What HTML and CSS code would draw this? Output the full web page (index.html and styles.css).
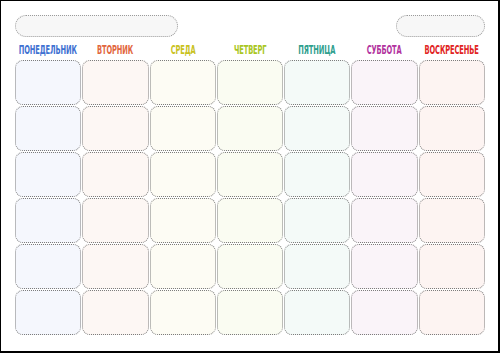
FILE: index.html
```html
<!DOCTYPE html>
<html>
<head>
<meta charset="utf-8">
<link rel="stylesheet" href="styles.css">
</head>
<body>
<div class="frame">
  <div class="header">
    <div class="pill pill-wide"></div>
    <div class="pill pill-short"></div>
  </div>
  <div class="days">
    <div class="day mon"><span class="day-text">ПОНЕДЕЛЬНИК</span></div>
    <div class="day tue"><span class="day-text">ВТОРНИК</span></div>
    <div class="day wed"><span class="day-text">СРЕДА</span></div>
    <div class="day thu"><span class="day-text">ЧЕТВЕРГ</span></div>
    <div class="day fri"><span class="day-text">ПЯТНИЦА</span></div>
    <div class="day sat"><span class="day-text">СУББОТА</span></div>
    <div class="day sun"><span class="day-text">ВОСКРЕСЕНЬЕ</span></div>
  </div>
  <div class="grid">
    <div class="cell c1"></div><div class="cell c2"></div><div class="cell c3"></div><div class="cell c4"></div><div class="cell c5"></div><div class="cell c6"></div><div class="cell c7"></div>
    <div class="cell c1"></div><div class="cell c2"></div><div class="cell c3"></div><div class="cell c4"></div><div class="cell c5"></div><div class="cell c6"></div><div class="cell c7"></div>
    <div class="cell c1"></div><div class="cell c2"></div><div class="cell c3"></div><div class="cell c4"></div><div class="cell c5"></div><div class="cell c6"></div><div class="cell c7"></div>
    <div class="cell c1"></div><div class="cell c2"></div><div class="cell c3"></div><div class="cell c4"></div><div class="cell c5"></div><div class="cell c6"></div><div class="cell c7"></div>
    <div class="cell c1"></div><div class="cell c2"></div><div class="cell c3"></div><div class="cell c4"></div><div class="cell c5"></div><div class="cell c6"></div><div class="cell c7"></div>
    <div class="cell c1"></div><div class="cell c2"></div><div class="cell c3"></div><div class="cell c4"></div><div class="cell c5"></div><div class="cell c6"></div><div class="cell c7"></div>
  </div>
</div>
</body>
</html>
```
FILE: styles.css
```css
html, body {
  margin: 0;
  padding: 0;
  background: #ffffff;
}
.frame {
  box-sizing: border-box;
  width: 500px;
  height: 353px;
  border: 1px solid #000;
  border-bottom-width: 2px;
  border-right-width: 2px;
  background: #fff;
  padding: 14px 13px 0 14px;
  font-family: "DejaVu Sans", sans-serif;
}
.header {
  display: flex;
  justify-content: space-between;
  height: 22px;
}
.pill {
  box-sizing: border-box;
  height: 22px;
  border-radius: 11px;
  border: 1px dotted #9a9a9a;
  background: #f7f7f7;
}
.pill-wide { width: 163px; }
.pill-short { width: 89px; }
.days {
  display: grid;
  grid-template-columns: repeat(7, minmax(0, 1fr));
  column-gap: 1px;
  margin-top: 6px;
  height: 17px;
}
.day {
  display: flex;
  justify-content: center;
  font-size: 12px;
  font-weight: bold;
  font-stretch: condensed;
  line-height: 14px;
  letter-spacing: -0.2px;
  white-space: nowrap;
  min-width: 0;
}
.day-text {
  display: inline-block;
  flex: none;
  transform: scaleX(0.62);
}
.mon { color: #3f72d2; }
.tue { color: #e2673f; }
.wed { color: #c9c21f; }
.thu { color: #a9c623; }
.fri { color: #2fa08e; }
.sat { color: #b2339e; }
.sun { color: #e12424; }
.grid {
  display: grid;
  grid-template-columns: repeat(7, minmax(0, 1fr));
  grid-template-rows: repeat(6, 45px);
  gap: 1px;
}
.cell {
  box-sizing: border-box;
  border: 1px dotted #7c7c7c;
  border-radius: 8px;
}
.c1 { background: #f5f7fd; }
.c2 { background: #fdf7f4; }
.c3 { background: #fdfcf4; }
.c4 { background: #fafcf2; }
.c5 { background: #f4faf8; }
.c6 { background: #faf4f9; }
.c7 { background: #fdf4f2; }
```
